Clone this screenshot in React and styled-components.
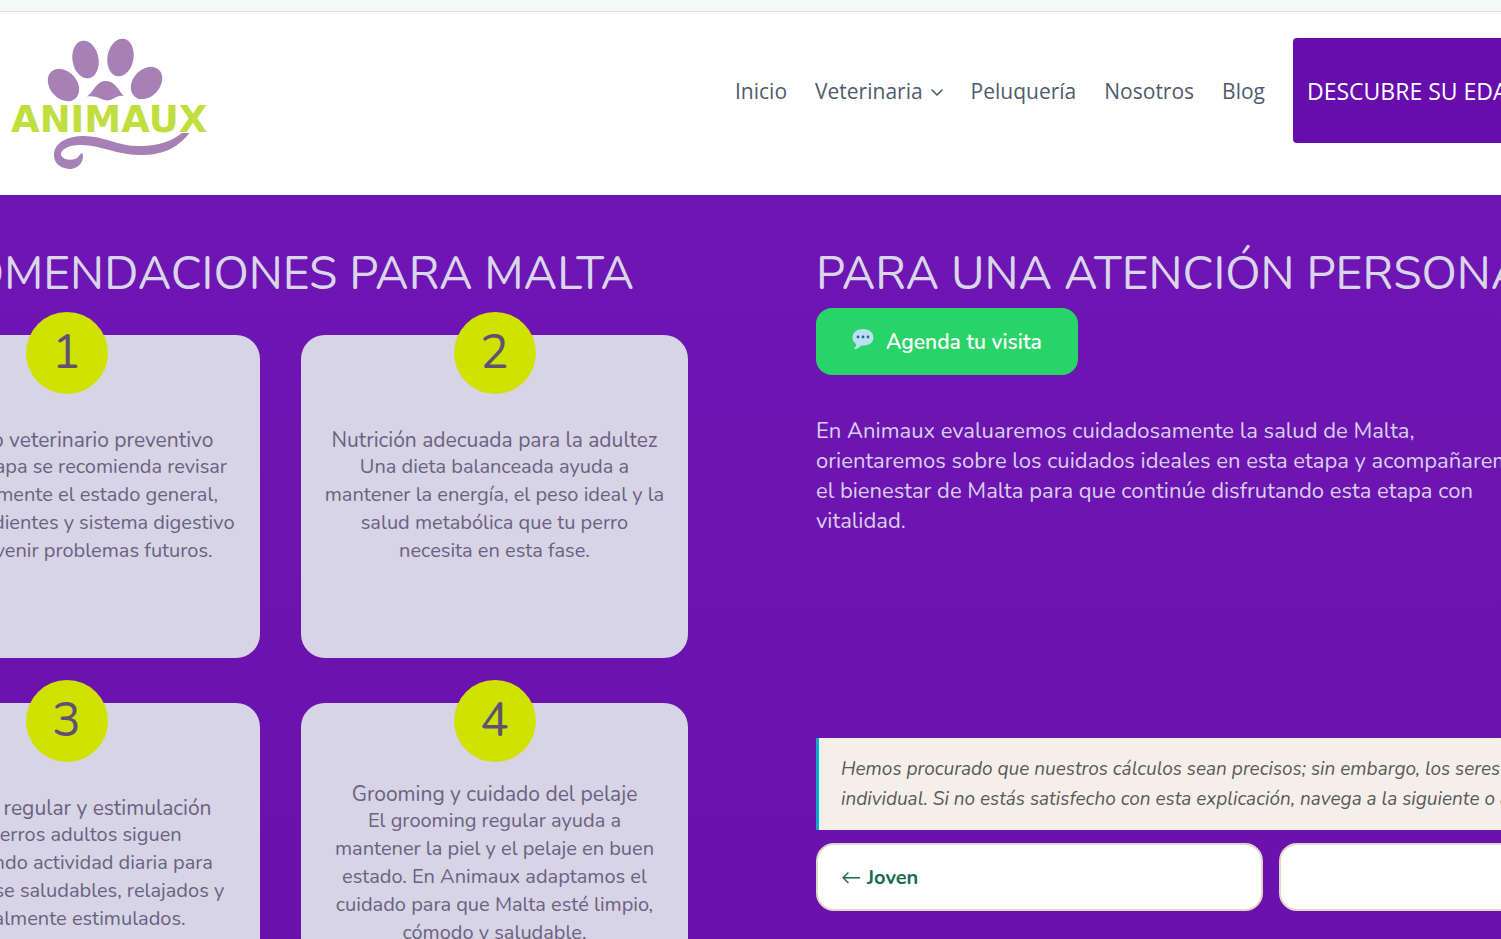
import React from "react";
import styled, { createGlobalStyle } from "styled-components";

const GlobalStyle = createGlobalStyle`
  * {
    box-sizing: border-box;
  }

  body {
    margin: 0;
    background: #ffffff;
    font-family: Nunito, Lato, sans-serif;
  }
`;

const Page = styled.div`
  overflow: hidden;
`;

const TopBar = styled.div`
  height: 12px;
  background: #f4faf8;
  border-bottom: 1px solid #dbe5e2;
`;

const Header = styled.header`
  display: flex;
  justify-content: space-between;
  align-items: flex-start;
  padding: 26px 0 26px 10px;
  margin-right: -20px;
  background: #ffffff;
`;

const LogoLink = styled.a`
  display: block;
  height: 131px;
`;

const LogoText = styled.text`
  font-family: "DejaVu Sans", sans-serif;
  font-size: 37px;
  font-weight: 700;
  fill: #c0de3e;
`;

const Nav = styled.nav`
  display: flex;
  align-items: center;
  gap: 28px;
  font-family: "Open Sans", sans-serif;
`;

const NavLink = styled.a`
  display: flex;
  align-items: center;
  gap: 8px;
  color: #4f5b6d;
  font-size: 21px;
  line-height: 32px;
  text-decoration: none;
`;

const AgeButton = styled.a`
  display: flex;
  align-items: center;
  width: 228px;
  height: 105px;
  padding: 0 14px;
  border-radius: 4px;
  background: #670dac;
  color: #ffffff;
  font-size: 23px;
  line-height: 32px;
  white-space: nowrap;
  text-decoration: none;
`;

const Hero = styled.main`
  background: linear-gradient(#6e16b4, #6a10ab);
`;

const Columns = styled.div`
  display: grid;
  grid-template-columns: minmax(0, 815fr) minmax(0, 910fr);
  gap: 128px;
  margin: 0 -225px 0 -127px;
  padding: 50px 0;
`;

const Title = styled.h2`
  margin: 0;
  padding-right: ${props => (props.$end ? "54px" : "0")};
  color: #dad6ea;
  font-size: 46px;
  font-weight: 400;
  line-height: 58px;
  text-align: ${props => (props.$end ? "right" : "left")};
  white-space: nowrap;
`;

const Cards = styled.div`
  display: grid;
  grid-template-columns: 1fr 1fr;
  gap: 45px 41px;
  margin-top: 32px;
`;

const StyledCard = styled.article`
  position: relative;
  display: flex;
  flex-direction: column;
  justify-content: center;
  min-height: 323px;
  padding: 0 23px;
  border-radius: 24px;
  background: #d7d4e6;
  color: #6a6282;
  text-align: center;
`;

const Badge = styled.span`
  position: absolute;
  top: -23px;
  left: 50%;
  width: 82px;
  height: 82px;
  margin-left: -41px;
  border-radius: 50%;
  background: #d0e200;
  color: #5e5272;
  font-size: 48px;
  line-height: 80px;
`;

const CardTitle = styled.h3`
  margin: 0;
  font-size: 21px;
  font-weight: 400;
  line-height: 25px;
  white-space: nowrap;
`;

const CardText = styled.p`
  margin: 0;
  font-size: 20px;
  line-height: 28px;
`;

const VisitButton = styled.button`
  display: flex;
  align-items: center;
  gap: 12px;
  height: 67px;
  margin-top: 5px;
  padding: 0 36px;
  border: 0;
  border-radius: 16px;
  background: #28d468;
  color: #ffffff;
  font-family: inherit;
  font-size: 21px;
  font-weight: 600;
`;

const Intro = styled.p`
  max-width: 718px;
  min-height: 322px;
  margin: 41px 0 0;
  color: #d7d0ea;
  font-size: 22px;
  line-height: 30px;
`;

const Note = styled.p`
  margin: 0;
  padding: 16px 22px;
  border-left: 3px solid #00aec9;
  background: #f4f0e9;
  color: #5a5a5a;
  font-size: 19px;
  font-style: italic;
  line-height: 30px;
`;

const Stages = styled.nav`
  display: grid;
  grid-template-columns: 1fr 1fr;
  gap: 16px;
  margin-top: 13px;
`;

const StageLink = styled.a`
  display: flex;
  align-items: center;
  justify-content: ${props => (props.$next ? "flex-end" : "flex-start")};
  gap: 6px;
  height: 68px;
  padding: 0 23px;
  border: 2px solid #e0d8c6;
  border-radius: 18px;
  background: #ffffff;
  color: #1b6b50;
  font-size: 20px;
  font-weight: 700;
  text-decoration: none;
`;

const Arrow = styled.span`
  font-weight: 400;
`;

const cards = [
  {
    title: "Chequeo veterinario preventivo",
    text:
      "En esta etapa se recomienda revisar periódicamente el estado general, músculos, dientes y sistema digestivo para prevenir problemas futuros."
  },
  {
    title: "Nutrición adecuada para la adultez",
    text:
      "Una dieta balanceada ayuda a mantener la energía, el peso ideal y la salud metabólica que tu perro necesita en esta fase."
  },
  {
    title: "Ejercicio regular y estimulación",
    text:
      "Los perros adultos siguen necesitando actividad diaria para mantenerse saludables, relajados y mentalmente estimulados."
  },
  {
    title: "Grooming y cuidado del pelaje",
    text:
      "El grooming regular ayuda a mantener la piel y el pelaje en buen estado. En Animaux adaptamos el cuidado para que Malta esté limpio, cómodo y saludable."
  }
];

function Logo() {
  return (
    <svg width="201" height="131" viewBox="0 0 201 131">
      <g fill="#a780b5">
        <ellipse cx="53.5" cy="47" rx="13.5" ry="18" transform="rotate(-42 53.5 47)" />
        <ellipse cx="75.5" cy="21.5" rx="13" ry="19" transform="rotate(-10 75.5 21.5)" />
        <ellipse cx="110.5" cy="19.5" rx="13" ry="19" transform="rotate(10 110.5 19.5)" />
        <ellipse cx="136.5" cy="45" rx="13.5" ry="18" transform="rotate(42 136.5 45)" />
        <path d="M77 58.5 C84 54 86 43 96 43 C106 43 108 53 114 58 C106 57 104 62 97.5 62.5 C91 62 87 57 77 58.5 Z" />
        <path d="M179.5 95 C166 112 150 117 131 117 C107 117 87 106 70 107 C58 107 50 112 51 117 C54 123 65 123 68 119 C70 117 71 115 72 115 C75 120 71 131 59 131 C48 130 43 123 44 115 C46 103 60 98 74 98 C94 98 110 109 131 108 C148 108 162 103 172 95 Z" />
      </g>
      <LogoText x="1" y="94">
        ANIMAUX
      </LogoText>
    </svg>
  );
}

function Chevron() {
  return (
    <svg width="12" height="12" viewBox="0 0 12 12" fill="none" aria-hidden="true">
      <path
        d="M1 5 L6 10 L11 5"
        stroke="currentColor"
        strokeWidth="1.6"
        strokeLinecap="round"
        strokeLinejoin="round"
      />
    </svg>
  );
}

function ChatBubble() {
  return (
    <svg width="22" height="26" viewBox="0 0 22 26" aria-hidden="true">
      <path
        d="M11 0 C17 0 21.5 3.5 21.5 8.5 C21.5 13.5 17 16.5 11.5 16.5 C9 16.5 9 16.8 7 18.5 C5 20 3.5 20.3 1.5 20 C3.5 18.5 4 17 4 15 C1.8 13.5 0.5 11.2 0.5 8.5 C0.5 3.5 5 0 11 0 Z"
        fill="#bddff2"
      />
      <g fill="#2b6590">
        <circle cx="6" cy="8" r="1.4" />
        <circle cx="11" cy="8" r="1.4" />
        <circle cx="16" cy="8" r="1.4" />
      </g>
    </svg>
  );
}

function Card({ number, title, text }) {
  return (
    <StyledCard>
      <Badge>{number}</Badge>
      <CardTitle>{title}</CardTitle>
      <CardText>{text}</CardText>
    </StyledCard>
  );
}

function App() {
  return (
    <Page>
      <GlobalStyle />
      <TopBar />
      <Header>
        <LogoLink href="#inicio" aria-label="Animaux">
          <Logo />
        </LogoLink>
        <Nav>
          <NavLink href="#inicio">Inicio</NavLink>
          <NavLink href="#veterinaria">
            Veterinaria
            <Chevron />
          </NavLink>
          <NavLink href="#peluqueria">Peluquería</NavLink>
          <NavLink href="#nosotros">Nosotros</NavLink>
          <NavLink href="#blog">Blog</NavLink>
          <AgeButton href="#edad">DESCUBRE SU EDAD</AgeButton>
        </Nav>
      </Header>

      <Hero>
        <Columns>
          <section>
            <Title $end>RECOMENDACIONES PARA MALTA</Title>
            <Cards>
              {cards.map((card, index) => (
                <Card key={card.title} number={index + 1} {...card} />
              ))}
            </Cards>
          </section>

          <section>
            <Title>PARA UNA ATENCIÓN PERSONALIZADA</Title>
            <VisitButton type="button">
              <ChatBubble />
              Agenda tu visita
            </VisitButton>
            <Intro>
              En Animaux evaluaremos cuidadosamente la salud de Malta,
              orientaremos sobre los cuidados ideales en esta etapa y
              acompañaremos el bienestar de Malta para que continúe disfrutando
              esta etapa con vitalidad.
            </Intro>
            <Note>
              Hemos procurado que nuestros cálculos sean precisos; sin embargo,
              los seres vivos tienen un ciclo individual. Si no estás satisfecho
              con esta explicación, navega a la siguiente o anterior.
            </Note>
            <Stages>
              <StageLink href="#joven">
                <Arrow>←</Arrow>
                Joven
              </StageLink>
              <StageLink href="#senior" $next>
                Senior
                <Arrow>→</Arrow>
              </StageLink>
            </Stages>
          </section>
        </Columns>
      </Hero>
    </Page>
  );
}

export default App;
